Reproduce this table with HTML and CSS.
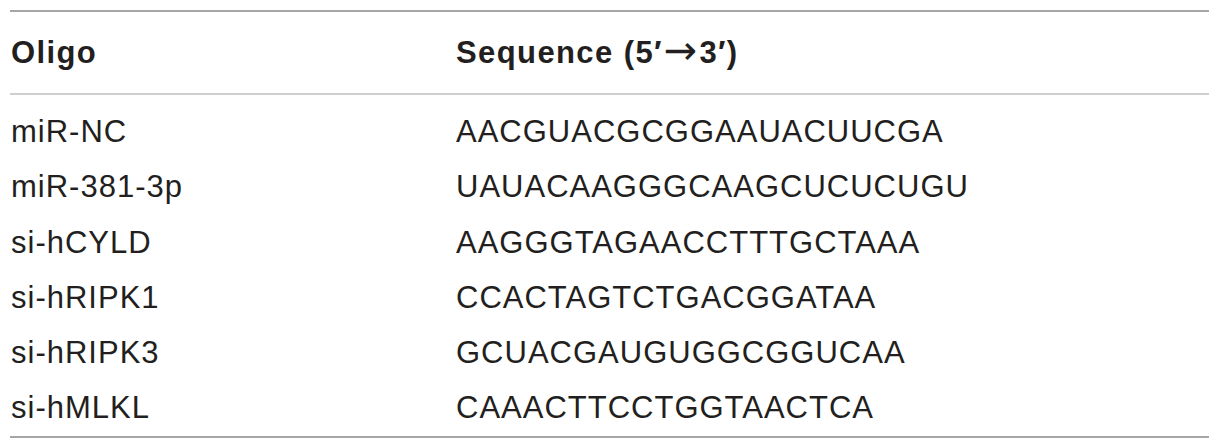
FILE: index.html
```html
<!DOCTYPE html>
<html lang="en">
<head>
<meta charset="utf-8">
<title>Oligo sequences</title>
<link rel="stylesheet" href="styles.css">
</head>
<body>
<div class="table">
  <div class="row head">
    <div class="cell c1">Oligo</div>
    <div class="cell c2">Sequence (5′<span class="arrow">→</span>3′)</div>
  </div>
  <div class="body">
    <div class="row"><div class="cell c1">miR-NC</div><div class="cell c2">AACGUACGCGGAAUACUUCGA</div></div>
    <div class="row"><div class="cell c1">miR-381-3p</div><div class="cell c2">UAUACAAGGGCAAGCUCUCUGU</div></div>
    <div class="row"><div class="cell c1">si-hCYLD</div><div class="cell c2">AAGGGTAGAACCTTTGCTAAA</div></div>
    <div class="row"><div class="cell c1">si-hRIPK1</div><div class="cell c2">CCACTAGTCTGACGGATAA</div></div>
    <div class="row"><div class="cell c1">si-hRIPK3</div><div class="cell c2">GCUACGAUGUGGCGGUCAA</div></div>
    <div class="row"><div class="cell c1">si-hMLKL</div><div class="cell c2">CAAACTTCCTGGTAACTCA</div></div>
  </div>
</div>
</body>
</html>
```

FILE: styles.css
```css
html, body {
  margin: 0;
  padding: 0;
  background: #ffffff;
}

body {
  font-family: "Liberation Sans", Arial, Helvetica, sans-serif;
  color: #231f20;
}

.table {
  margin: 10px 0 0 10px;
  width: 1199px;
  border-top: 2px solid #a6a6a6;
  border-bottom: 2px solid #a6a6a6;
}

.row {
  display: grid;
  grid-template-columns: 446px 1fr;
}

.cell {
  font-size: 31px;
  letter-spacing: 1px;
  line-height: 55.3px;
  white-space: nowrap;
}

.c1 {
  padding-left: 1px;
}

.head {
  border-bottom: 2px solid #cfcfcf;
}

.head .cell {
  font-weight: bold;
  line-height: 81px;
  letter-spacing: 1.4px;
}

.arrow {
  font-family: "DejaVu Sans", sans-serif;
  font-weight: normal;
  font-size: 40px;
  line-height: 0;
  letter-spacing: 0;
  margin: 0 2px 0 1px;
  vertical-align: -1px;
}

.body {
  padding-top: 9px;
}
```
